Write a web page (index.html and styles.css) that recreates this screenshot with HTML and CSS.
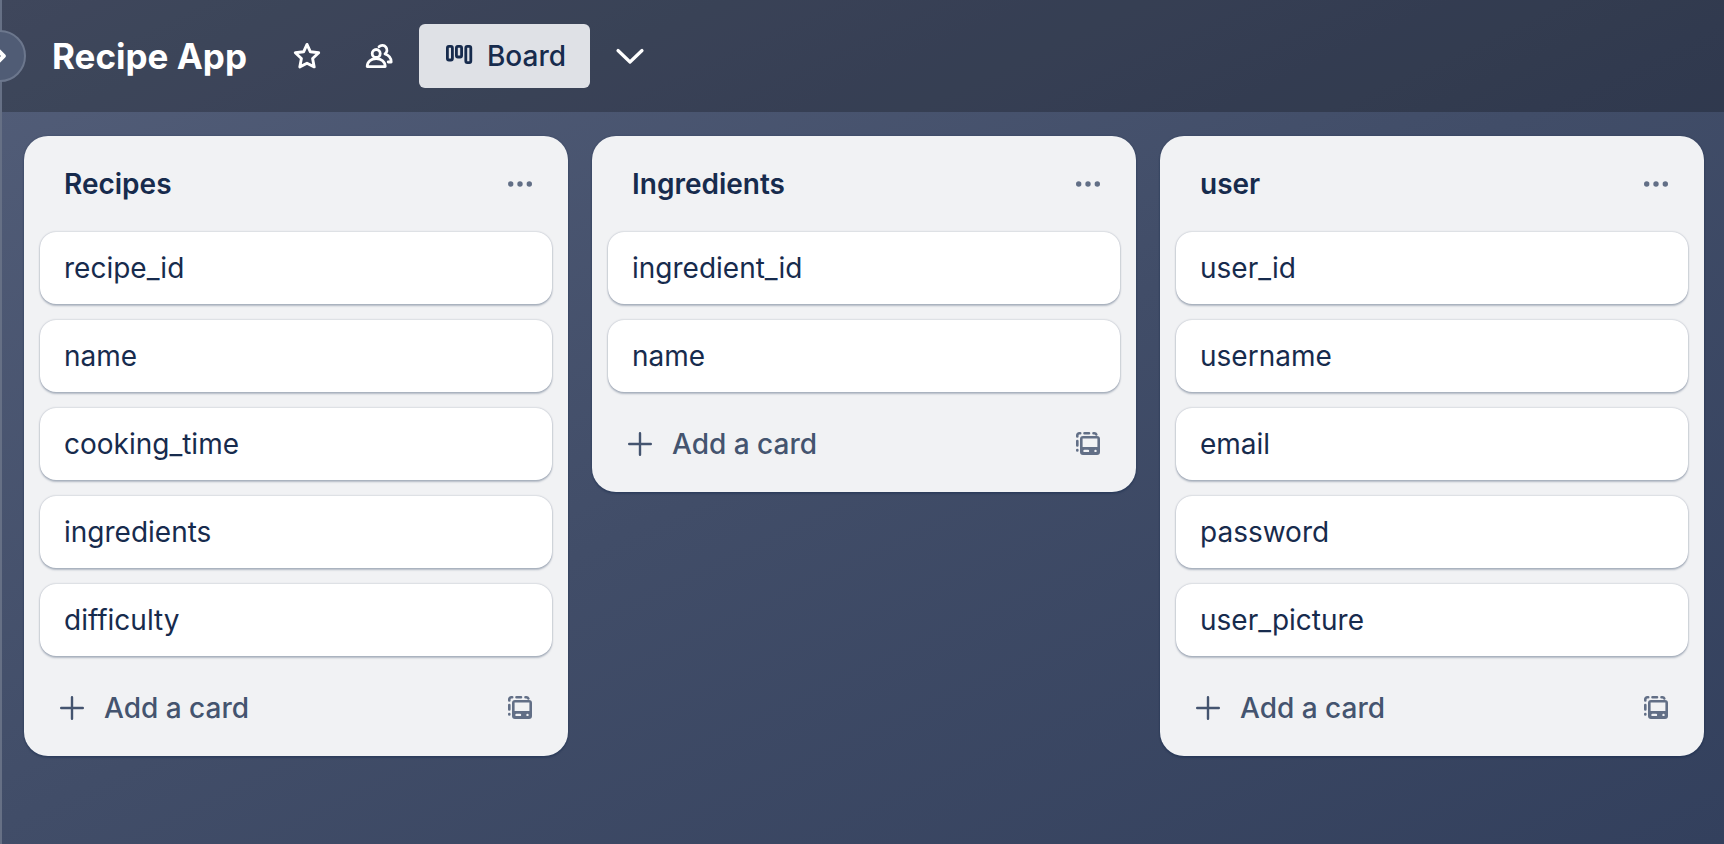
FILE: index.html
```
<!DOCTYPE html>
<html lang="en">
<head>
<meta charset="utf-8">
<title>Recipe App</title>
<link rel="stylesheet" href="styles.css">
</head>
<body>
<svg class="sprite" aria-hidden="true">
  <symbol id="dots" viewBox="0 0 24 24"><g fill="currentColor"><circle cx="2.7" cy="12" r="2.7"/><circle cx="12" cy="12" r="2.7"/><circle cx="21.3" cy="12" r="2.7"/></g></symbol>
  <symbol id="plus" viewBox="0 0 24 24"><path d="M12 1.200v21.600M1.200 12h21.600" fill="none" stroke="currentColor" stroke-width="2.400" stroke-linecap="round"/></symbol>
  <symbol id="template" viewBox="0 0 24 24">
    <path d="M1.300 4.500V3.300a2 2 0 0 1 2-2H4.200M8.500 1.300h4.500M17.500 1.300H18.500a2 2 0 0 1 1.800 1.200M1.300 9v4.500M1.300 18v.5" fill="none" stroke="currentColor" stroke-width="2.600" stroke-linecap="round"/>
    <path fill="currentColor" fill-rule="evenodd" d="M7 4h14a3 3 0 0 1 3 3v13a3 3 0 0 1-3 3H7a3 3 0 0 1-3-3V7a3 3 0 0 1 3-3zM6.600 6.600v8.400h14.800V6.600zM8.500 17.700a1.200 1.200 0 0 0 0 2.400h3.500a1.200 1.200 0 0 0 0-2.400zM19.500 17.700a1.200 1.200 0 0 0 0 2.400a1.200 1.200 0 0 0 0-2.400z"/>
  </symbol>
</svg>
<div class="app">
  <button class="expand" type="button" aria-label="Expand sidebar">
    <svg class="expand-icon" viewBox="0 0 14 16" aria-hidden="true"><path d="M5.800 3l5 5-5 5" fill="none" stroke="currentColor" stroke-width="4" stroke-linecap="round" stroke-linejoin="round"/></svg>
  </button>
  <header class="topbar">
    <h1 class="title">Recipe App</h1>
    <button class="icon-button" type="button" aria-label="Star board">
      <svg class="icon-large" viewBox="0 0 32 32" aria-hidden="true"><path d="M16 4.400l3.400 7.400 8.300 1-6.100 5.700 1.600 8.400L16 23.200l-7.200 3.700 1.600-8.400-6.100-5.700 8.300-1z" fill="none" stroke="currentColor" stroke-width="2.900" stroke-linejoin="round"/></svg>
    </button>
    <button class="icon-button" type="button" aria-label="Workspace visible">
      <svg class="icon-large" viewBox="0 0 32 32" aria-hidden="true"><g fill="none" stroke="currentColor" stroke-width="2.800" stroke-linecap="round" stroke-linejoin="round"><circle cx="13.200" cy="13.500" r="4"/><path d="M4.200 26.600c0-5 4-8 9-8s9 3 9 8zM16 6.800a4.700 4.700 0 1 1 6 7.200c3.800 1.200 6.200 4.200 6.200 8h-3"/></g></svg>
    </button>
    <button class="view-button" type="button">
      <svg class="icon-large" viewBox="0 0 32 32" aria-hidden="true"><g fill="none" stroke="currentColor" stroke-width="2.800"><rect x="4.400" y="6.400" width="5" height="13.600" rx="1.500"/><rect x="13.400" y="6.400" width="5.200" height="10.600" rx="1.500"/><rect x="22.800" y="6.400" width="5" height="16.200" rx="1.500"/></g></svg>
      Board
    </button>
    <button class="icon-button more" type="button" aria-label="Views">
      <svg class="icon-large" viewBox="0 0 32 32" aria-hidden="true"><path d="M4 10.500L16 22 28 10.500" fill="none" stroke="currentColor" stroke-width="3.200" stroke-linecap="round" stroke-linejoin="round"/></svg>
    </button>
  </header>
  <main class="board">
    <section class="list">
      <header class="list-head"><h2 class="list-title">Recipes</h2><button class="small-button" type="button" aria-label="List actions"><svg class="icon" aria-hidden="true"><use href="#dots"/></svg></button></header>
      <ol class="cards"><li class="card">recipe_id</li><li class="card">name</li><li class="card">cooking_time</li><li class="card">ingredients</li><li class="card">difficulty</li></ol>
      <footer class="list-foot"><button class="add" type="button"><svg class="icon" aria-hidden="true"><use href="#plus"/></svg>Add a card</button><button class="small-button" type="button" aria-label="Create from template"><svg class="icon" aria-hidden="true"><use href="#template"/></svg></button></footer>
    </section>
    <section class="list">
      <header class="list-head"><h2 class="list-title">Ingredients</h2><button class="small-button" type="button" aria-label="List actions"><svg class="icon" aria-hidden="true"><use href="#dots"/></svg></button></header>
      <ol class="cards"><li class="card">ingredient_id</li><li class="card">name</li></ol>
      <footer class="list-foot"><button class="add" type="button"><svg class="icon" aria-hidden="true"><use href="#plus"/></svg>Add a card</button><button class="small-button" type="button" aria-label="Create from template"><svg class="icon" aria-hidden="true"><use href="#template"/></svg></button></footer>
    </section>
    <section class="list">
      <header class="list-head"><h2 class="list-title">user</h2><button class="small-button" type="button" aria-label="List actions"><svg class="icon" aria-hidden="true"><use href="#dots"/></svg></button></header>
      <ol class="cards"><li class="card">user_id</li><li class="card">username</li><li class="card">email</li><li class="card">password</li><li class="card">user_picture</li></ol>
      <footer class="list-foot"><button class="add" type="button"><svg class="icon" aria-hidden="true"><use href="#plus"/></svg>Add a card</button><button class="small-button" type="button" aria-label="Create from template"><svg class="icon" aria-hidden="true"><use href="#template"/></svg></button></footer>
    </section>
  </main>
</div>
</body>
</html>
```
FILE: styles.css
```
* { box-sizing: border-box; }

body {
  margin: 0;
  font-family: Inter, "Liberation Sans", sans-serif;
  font-size: 28px;
  line-height: 40px;
  color: #172b4d;
}

button {
  margin: 0;
  padding: 0;
  border: 0;
  background: none;
  font: inherit;
  color: inherit;
  display: flex;
  align-items: center;
}

.sprite { display: none; }

.app {
  position: relative;
  min-height: 100vh;
  overflow: hidden;
  background: linear-gradient(155deg, #535e79 0%, #414d68 50%, #33405d 100%);
}

/* Edge of the collapsed sidebar */
.app::before {
  content: "";
  position: absolute;
  top: 0;
  bottom: 0;
  left: 0;
  width: 2px;
  background: #667085;
}

.expand {
  position: absolute;
  top: 30px;
  left: -26px;
  width: 52px;
  height: 52px;
  border: 2px solid #6c778d;
  border-radius: 50%;
  background: #505c75;
  color: #fff;
  justify-content: center;
}

.expand-icon { width: 14px; height: 16px; }

.topbar {
  display: flex;
  align-items: center;
  height: 112px;
  padding-left: 52px;
  background: rgba(0, 0, 0, 0.24);
  color: #fff;
}

.title {
  margin: 0 28px 0 0;
  font-size: 35px;
  font-weight: 700;
}

.icon-button {
  width: 64px;
  height: 64px;
  margin-right: 8px;
  justify-content: center;
}

.icon-large { width: 32px; height: 32px; }

.view-button {
  height: 64px;
  padding: 0 24px;
  gap: 12px;
  border-radius: 6px;
  background: #dfe1e6;
  color: #172b4d;
  font-weight: 500;
}

.more { margin-left: 8px; }

.board {
  display: grid;
  grid-template-columns: repeat(3, minmax(0, 1fr));
  align-items: start;
  gap: 24px;
  padding: 24px 20px 24px 24px;
}

.list {
  padding: 16px 16px 20px;
  border-radius: 24px;
  background: #f1f2f4;
  box-shadow: 0 2px 2px rgba(9, 30, 66, 0.25), 0 0 2px rgba(9, 30, 66, 0.31);
}

.list-head {
  display: flex;
  align-items: center;
  justify-content: space-between;
  height: 64px;
  padding-left: 24px;
  margin-bottom: 16px;
}

.list-title {
  margin: 0;
  font-size: 28px;
  font-weight: 600;
}

.small-button {
  width: 64px;
  height: 56px;
  justify-content: center;
  color: #626f86;
}

.icon { width: 24px; height: 24px; }

.cards {
  display: grid;
  gap: 16px;
  margin: 0;
  padding: 0;
  list-style: none;
}

.card {
  padding: 16px 24px;
  border-radius: 16px;
  background: #fff;
  box-shadow: 0 2px 2px rgba(9, 30, 66, 0.25), 0 0 2px rgba(9, 30, 66, 0.31);
}

.list-foot {
  display: flex;
  justify-content: space-between;
  padding-top: 24px;
}

.add {
  height: 56px;
  padding-left: 20px;
  gap: 20px;
  color: #44546f;
  font-weight: 500;
}
```
